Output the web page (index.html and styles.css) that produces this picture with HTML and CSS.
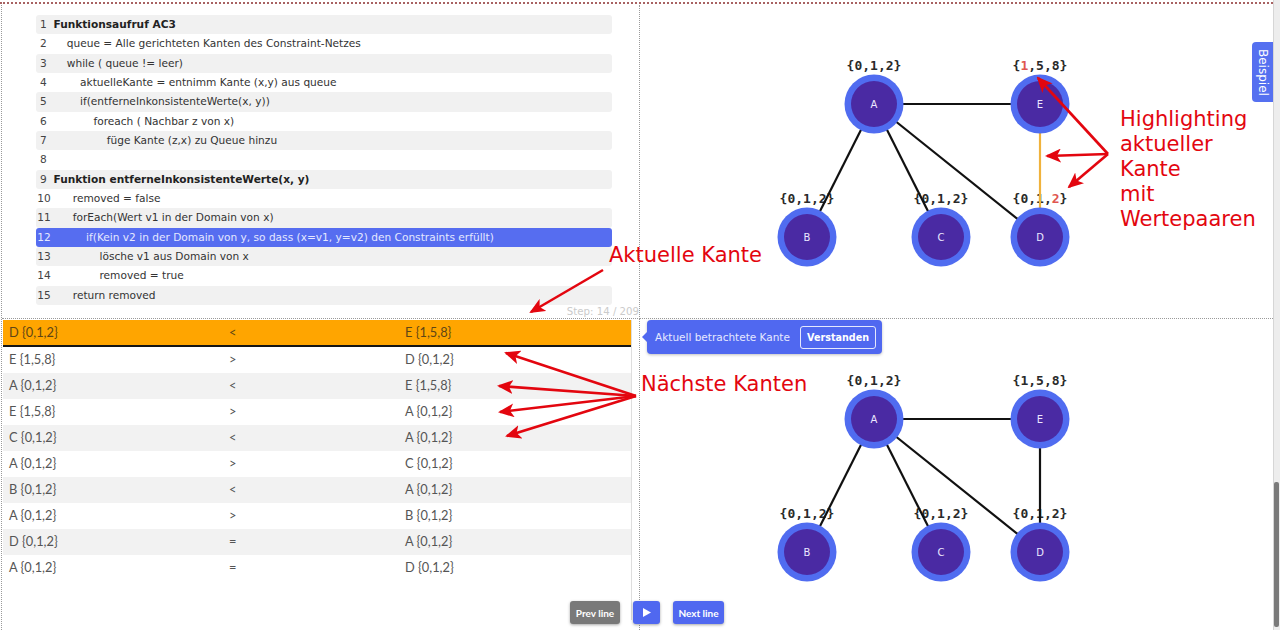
FILE: index.html
```html
<!DOCTYPE html>
<html lang="de">
<head>
<meta charset="utf-8">
<title>AC3</title>
<link rel="stylesheet" href="styles.css">
</head>
<body>
<div class="page">
  <div class="main">
    <div class="topline"></div>
    <div class="grid">
      <section class="panel code-panel">
        <div class="code">
          <div class="row odd"><span class="ln">1</span><span class="txt i0 b">Funktionsaufruf AC3</span></div>
          <div class="row"><span class="ln">2</span><span class="txt i1">queue = Alle gerichteten Kanten des Constraint-Netzes</span></div>
          <div class="row odd"><span class="ln">3</span><span class="txt i1">while ( queue != leer)</span></div>
          <div class="row"><span class="ln">4</span><span class="txt i2">aktuelleKante = entnimm Kante (x,y) aus queue</span></div>
          <div class="row odd"><span class="ln">5</span><span class="txt i2">if(entferneInkonsistenteWerte(x, y))</span></div>
          <div class="row"><span class="ln">6</span><span class="txt i3">foreach ( Nachbar z von x)</span></div>
          <div class="row odd"><span class="ln">7</span><span class="txt i4">füge Kante (z,x) zu Queue hinzu</span></div>
          <div class="row"><span class="ln">8</span><span class="txt i0"></span></div>
          <div class="row odd"><span class="ln">9</span><span class="txt i0 b">Funktion entferneInkonsistenteWerte(x, y)</span></div>
          <div class="row wide"><span class="ln">10</span><span class="txt i1">removed = false</span></div>
          <div class="row odd wide"><span class="ln">11</span><span class="txt i1">forEach(Wert v1 in der Domain von x)</span></div>
          <div class="row wide active"><span class="ln">12</span><span class="txt i2">if(Kein v2 in der Domain von y, so dass (x=v1, y=v2) den Constraints erfüllt)</span></div>
          <div class="row odd wide"><span class="ln">13</span><span class="txt i3">lösche v1 aus Domain von x</span></div>
          <div class="row wide"><span class="ln">14</span><span class="txt i3">removed = true</span></div>
          <div class="row odd wide"><span class="ln">15</span><span class="txt i1">return removed</span></div>
        </div>
        <div class="step">Step: 14 / 209</div>
      </section>

      <section class="panel graph-panel top">
        <svg class="graph" width="633" height="313" viewBox="0 0 633 313">
          <g class="labels">
            <text x="234" y="65">{0,1,2}</text>
            <text x="400" y="65">{<tspan class="hl">1</tspan>,5,8}</text>
            <text x="167" y="198">{0,1,2}</text>
            <text x="301" y="198">{0,1,2}</text>
            <text x="400" y="198">{0,1,<tspan class="hl">2</tspan>}</text>
          </g>
          <g class="edges">
            <line x1="234" y1="99" x2="400" y2="99"/>
            <line x1="234" y1="99" x2="167" y2="232"/>
            <line x1="234" y1="99" x2="301" y2="232"/>
            <line x1="234" y1="99" x2="400" y2="232"/>
            <line class="cur" x1="400" y1="99" x2="400" y2="232"/>
          </g>
          <g class="nodes">
            <circle class="ring" cx="234" cy="99" r="29.5"/><circle class="core" cx="234" cy="99" r="23"/><text x="234" y="102.5">A</text>
            <circle class="ring" cx="400" cy="99" r="29.5"/><circle class="core" cx="400" cy="99" r="23"/><text x="400" y="102.5">E</text>
            <circle class="ring" cx="167" cy="232" r="29.5"/><circle class="core" cx="167" cy="232" r="23"/><text x="167" y="235.5">B</text>
            <circle class="ring" cx="301" cy="232" r="29.5"/><circle class="core" cx="301" cy="232" r="23"/><text x="301" y="235.5">C</text>
            <circle class="ring" cx="400" cy="232" r="29.5"/><circle class="core" cx="400" cy="232" r="23"/><text x="400" y="235.5">D</text>
          </g>
        </svg>
      </section>

      <section class="panel table-panel">
        <div class="edge-table">
          <div class="erow current"><span>D {0,1,2}</span><span>&lt;</span><span>E {1,5,8}</span></div>
          <div class="erow"><span>E {1,5,8}</span><span>&gt;</span><span>D {0,1,2}</span></div>
          <div class="erow alt"><span>A {0,1,2}</span><span>&lt;</span><span>E {1,5,8}</span></div>
          <div class="erow"><span>E {1,5,8}</span><span>&gt;</span><span>A {0,1,2}</span></div>
          <div class="erow alt"><span>C {0,1,2}</span><span>&lt;</span><span>A {0,1,2}</span></div>
          <div class="erow"><span>A {0,1,2}</span><span>&gt;</span><span>C {0,1,2}</span></div>
          <div class="erow alt"><span>B {0,1,2}</span><span>&lt;</span><span>A {0,1,2}</span></div>
          <div class="erow"><span>A {0,1,2}</span><span>&gt;</span><span>B {0,1,2}</span></div>
          <div class="erow alt"><span>D {0,1,2}</span><span>=</span><span>A {0,1,2}</span></div>
          <div class="erow"><span>A {0,1,2}</span><span>=</span><span>D {0,1,2}</span></div>
        </div>
      </section>

      <section class="panel graph-panel bottom">
        <svg class="graph" width="633" height="311" viewBox="0 0 633 311">
          <g class="labels">
            <text x="234" y="66">{0,1,2}</text>
            <text x="400" y="66">{1,5,8}</text>
            <text x="167" y="199">{0,1,2}</text>
            <text x="301" y="199">{0,1,2}</text>
            <text x="400" y="199">{0,1,2}</text>
          </g>
          <g class="edges">
            <line x1="234" y1="100" x2="400" y2="100"/>
            <line x1="234" y1="100" x2="167" y2="233"/>
            <line x1="234" y1="100" x2="301" y2="233"/>
            <line x1="234" y1="100" x2="400" y2="233"/>
            <line x1="400" y1="100" x2="400" y2="233"/>
          </g>
          <g class="nodes">
            <circle class="ring" cx="234" cy="100" r="29.5"/><circle class="core" cx="234" cy="100" r="23"/><text x="234" y="103.5">A</text>
            <circle class="ring" cx="400" cy="100" r="29.5"/><circle class="core" cx="400" cy="100" r="23"/><text x="400" y="103.5">E</text>
            <circle class="ring" cx="167" cy="233" r="29.5"/><circle class="core" cx="167" cy="233" r="23"/><text x="167" y="236.5">B</text>
            <circle class="ring" cx="301" cy="233" r="29.5"/><circle class="core" cx="301" cy="233" r="23"/><text x="301" y="236.5">C</text>
            <circle class="ring" cx="400" cy="233" r="29.5"/><circle class="core" cx="400" cy="233" r="23"/><text x="400" y="236.5">D</text>
          </g>
        </svg>
      </section>
    </div>

    <div class="tooltip">
      <span class="tip-text">Aktuell betrachtete Kante</span>
      <button class="tip-btn">Verstanden</button>
    </div>

    <div class="tab">Beispiel</div>

    <div class="controls">
      <button class="btn grey">Prev line</button>
      <button class="btn blue play"><svg width="8" height="9" viewBox="0 0 8 9"><path d="M0 0 L8 4.5 L0 9 Z" fill="#fff"/></svg></button>
      <button class="btn blue">Next line</button>
    </div>

    <svg class="annot" width="1273" height="630" viewBox="0 0 1273 630">
      <defs>
        <marker id="ah" markerUnits="userSpaceOnUse" markerWidth="16" markerHeight="14" refX="14" refY="7" orient="auto">
          <path d="M0 0 L16 7 L0 14 L4 7 Z" fill="#e3060f"/>
        </marker>
      </defs>
      <g class="arrows">
        <line x1="603" y1="270" x2="531" y2="312"/>
        <line x1="1108" y1="154" x2="1038" y2="78"/>
        <line x1="1108" y1="154" x2="1047" y2="156"/>
        <line x1="1108" y1="154" x2="1069" y2="187"/>
        <line x1="636" y1="396" x2="506" y2="353"/>
        <line x1="636" y1="396" x2="499" y2="386"/>
        <line x1="636" y1="396" x2="500" y2="412"/>
        <line x1="636" y1="396" x2="507" y2="436"/>
      </g>
    </svg>
    <div class="note note-current">Aktuelle Kante</div>
    <div class="note note-next">Nächste Kanten</div>
    <div class="note note-hl">Highlighting<br>aktueller<br>Kante<br>mit<br>Wertepaaren</div>
  </div>
  <div class="scrollbar"><div class="thumb"></div></div>
</div>
</body>
</html>
```

FILE: styles.css
```css
* { box-sizing: border-box; }
html, body { margin: 0; padding: 0; }
body {
  width: 1280px;
  height: 630px;
  overflow: hidden;
  background: #fff;
  font-family: "DejaVu Sans", Verdana, sans-serif;
  color: #333;
}
.page {
  display: flex;
  width: 1280px;
  height: 630px;
}
.main {
  position: relative;
  flex: 1;
  height: 630px;
}
.topline {
  height: 0;
  margin: 2px 0 1px;
  border-top: 2px dotted #a86262;
}
.grid {
  display: grid;
  grid-template-columns: 638px 1fr;
  grid-template-rows: 314px 311px;
  margin-left: 1px;
  border-left: 1px dotted #9a9a9a;
  height: 625px;
}
.panel { position: relative; overflow: hidden; }

/* code panel */
.code-panel {
  border-right: 1px dotted #9a9a9a;
  border-bottom: 1px dotted #9a9a9a;
  padding: 10px 2px 0 34px;
  display: flex;
  flex-direction: column;
}
.code { width: 576px; }
.row {
  height: 19.33px;
  line-height: 19.33px;
  font-size: 10.6px;
  padding-left: 4px;
  white-space: pre;
  border-radius: 3px;
  color: #333;
}
.row.odd { background: #f1f1f1; }
.row.wide { padding-left: 1.3px; }
.row.wide .ln { margin-right: 2px; }
.row.active { background: #566df0; color: #e4e8ff; }
.ln { color: #444; }
.row.active .ln { color: #e4e8ff; }
.txt { margin-left: 6.7px; }
.txt.i1 { margin-left: 20px; }
.txt.i2 { margin-left: 33.3px; }
.txt.i3 { margin-left: 46.7px; }
.txt.i4 { margin-left: 60px; }
.txt.b { font-weight: bold; color: #222; }
.step {
  text-align: right;
  font-size: 10.2px;
  line-height: 12px;
  color: #cbcbcb;
  margin-right: -2px;
  margin-top: 1px;
}

/* graphs */
.graph-panel.top { border-bottom: 1px dotted #9a9a9a; }
.graph { display: block; }
.graph .labels text {
  font-family: "DejaVu Sans Mono", monospace;
  font-weight: bold;
  font-size: 13px;
  fill: #2a2a2a;
  text-anchor: middle;
}
.graph .labels .hl { fill: #e0564f; }
.graph .edges line { stroke: #111; stroke-width: 2.2; }
.graph .edges line.cur { stroke: #f0b23c; }
.graph .ring { fill: #506cf0; }
.graph .core { fill: #4a2aa3; }
.graph .nodes text {
  font-family: "DejaVu Sans", sans-serif;
  font-size: 10px;
  fill: #ece8ff;
  text-anchor: middle;
}

/* table */
.table-panel {
  border-right: 1px dotted #9a9a9a;
  padding-top: 1px;
}
.edge-table {
  margin-left: 1px;
  width: 629px;
  height: 300px;
  border-right: 1px solid #dedede;
  font-family: Lato, "Liberation Sans", sans-serif;
  font-size: 12.8px;
  color: #555;
}
.erow {
  display: grid;
  grid-template-columns: 220px 176px 1fr;
  height: 26px;
  align-items: center;
  padding-bottom: 2px;
}
.erow span { padding-left: 6px; }
.erow.alt { background: #f2f2f2; }
.erow.current {
  height: 27px;
  background: #ffa500;
  border-bottom: 2px solid #151515;
  color: #5e4516;
}

/* tooltip */
.tooltip {
  position: absolute;
  left: 647px;
  top: 320px;
  width: 235px;
  height: 34px;
  background: #5068f0;
  border-radius: 4px;
  box-shadow: 0 1px 3px rgba(0,0,0,0.25);
  display: flex;
  align-items: center;
  padding: 0 6px 0 8px;
  justify-content: space-between;
}
.tooltip::before {
  content: "";
  position: absolute;
  left: -5px;
  top: 11px;
  border-top: 6px solid transparent;
  border-bottom: 6px solid transparent;
  border-right: 6px solid #5068f0;
}
.tip-text {
  font-size: 10.5px;
  color: #e6e9ff;
}
.tip-btn {
  font-family: "DejaVu Sans", sans-serif;
  font-weight: bold;
  font-size: 9.6px;
  color: #fff;
  background: transparent;
  border: 1px solid rgba(255,255,255,0.85);
  border-radius: 3px;
  height: 23px;
  padding: 0 6px;
}

/* side tab */
.tab {
  position: absolute;
  right: 0;
  top: 42px;
  width: 21px;
  height: 60px;
  background: #5570f0;
  border-radius: 4px 0 0 4px;
  color: #fff;
  font-size: 12px;
  writing-mode: vertical-rl;
  display: flex;
  align-items: center;
  justify-content: center;
}

/* controls */
.controls {
  position: absolute;
  left: 570px;
  top: 601px;
  display: flex;
  gap: 13px;
}
.btn {
  height: 23px;
  border: none;
  border-radius: 3px;
  color: #fff;
  font-family: Lato, "Liberation Sans", sans-serif;
  font-weight: bold;
  font-size: 10px;
  padding: 0;
  box-shadow: 0 1px 3px rgba(0,0,0,0.35);
  display: flex;
  align-items: center;
  justify-content: center;
}
.btn.grey { background: #797979; width: 50px; }
.btn.blue { background: #5068f0; width: 51px; }
.btn.play { width: 27px; }

/* annotations */
.annot {
  position: absolute;
  left: 0;
  top: 0;
  pointer-events: none;
}
.arrows line {
  stroke: #e3060f;
  stroke-width: 2.6;
  marker-end: url(#ah);
}
.note {
  position: absolute;
  font-family: "DejaVu Sans", sans-serif;
  font-size: 21px;
  line-height: 25px;
  color: #e3060f;
  white-space: nowrap;
}
.note-current { left: 609px; top: 243px; }
.note-next { left: 641px; top: 372px; }
.note-hl { left: 1120px; top: 107px; }

/* scrollbar */
.scrollbar {
  width: 7px;
  height: 630px;
  background: #ededed;
  border-left: 1px solid #d6d6d6;
  padding-top: 482px;
}
.thumb {
  width: 5px;
  height: 145px;
  background: #7a7a7a;
  border-radius: 2px;
}
```
